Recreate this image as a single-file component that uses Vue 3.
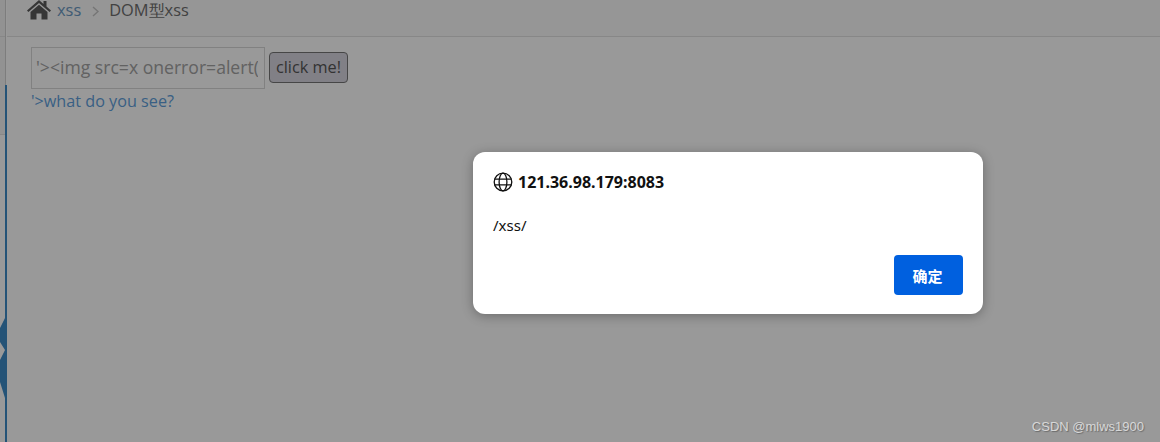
<template>
  <div class="page">
    <aside class="side">
      <div class="side-top">
        <div class="side-head"></div>
      </div>
      <div class="side-rest">
        <div class="side-item"></div>
        <svg class="side-arrows" width="5" height="80" viewBox="0 0 5 80">
          <path d="M5 0 L0 10 V24 L5 32 L0 42 V64 L5 80 Z" fill="#3d8ac7" />
        </svg>
      </div>
    </aside>
    <main class="main">
      <div class="crumbs">
        <svg class="home" width="24" height="20" viewBox="0 0 24 20">
          <path d="M12 0 L0 10.5 L1.4 12 L12 3 L22.6 12 L24 10.5 L19.5 6.5 V1 H16.5 V4 Z" fill="#5a5a5a" />
          <path d="M3.5 12 L12 4.8 L20.5 12 V19.5 H14.5 V13.5 H9.5 V19.5 H3.5 Z" fill="#5a5a5a" />
        </svg>
        <a class="crumb-link">xss</a>
        <svg class="sep" width="7" height="11" viewBox="0 0 7 11">
          <path d="M1 1 L6 5.5 L1 10" fill="none" stroke="#c4c4c4" stroke-width="1.4" />
        </svg>
        <span class="crumb-current">DOM型xss</span>
      </div>
      <div class="content">
        <div class="form-row">
          <input class="xss-input" type="text" value="'><img src=x onerror=alert(/xss/)>" readonly />
          <button class="click-btn">click me!</button>
        </div>
        <a class="see-link">'&gt;what do you see?</a>
      </div>
    </main>

    <div class="overlay">
      <div class="dialog">
        <div class="dialog-title">
          <svg width="20" height="20" viewBox="0 0 20 20" fill="none" stroke="#111" stroke-width="1.3">
            <circle cx="10" cy="10" r="8.8" />
            <ellipse cx="10" cy="10" rx="3.9" ry="8.8" />
            <path d="M1.4 7.2 H18.6 M1.4 12.8 H18.6" />
          </svg>
          <span>121.36.98.179:8083</span>
        </div>
        <div class="dialog-msg">/xss/</div>
        <div class="dialog-actions">
          <button class="ok-btn">确定</button>
        </div>
      </div>
    </div>

    <div class="watermark">CSDN @mlws1900</div>
  </div>
</template>

<script setup>
</script>

<style scoped>
.page {
  position: relative;
  display: flex;
  width: 1160px;
  height: 442px;
  overflow: hidden;
  background: #fff;
  font-family: "Open Sans", sans-serif;
}
.side {
  width: 7px;
  flex: none;
  display: flex;
  flex-direction: column;
}
.side-top {
  width: 5px;
  height: 85px;
  border-right: 1px solid #d0d0d0;
  background: #f4f4f4;
}
.side-head {
  height: 36px;
  border-bottom: 1px solid #e2e2e2;
}
.side-rest {
  flex: 1;
  border-right: 2px solid #3d8ac7;
}
.side-item {
  height: 50px;
  box-sizing: border-box;
  border-bottom: 1px solid #e2e2e2;
  background: #f4f4f4;
}
.side-arrows {
  display: block;
  margin-top: 183px;
}
.main {
  flex: 1;
}
.crumbs {
  display: flex;
  align-items: center;
  height: 37px;
  padding: 0 0 16px 20px;
  box-sizing: border-box;
  border-bottom: 1px solid #e2e2e2;
  background: #fafafa;
  font-size: 16.4px;
  line-height: 20px;
}
.home {
  margin-right: 6px;
}
.crumb-link {
  color: #6a98c2;
}
.sep {
  margin: 3px 10px 0 11px;
}
.crumb-current {
  color: #6e6e6e;
}
.content {
  padding: 10px 0 0 24px;
}
.form-row {
  display: flex;
  align-items: center;
  gap: 4px;
}
.xss-input {
  width: 234px;
  height: 42px;
  box-sizing: border-box;
  padding: 0 6px 2px 4px;
  border: 1px solid #d8d8d8;
  background: #fff;
  color: #a3a3a3;
  font-family: inherit;
  font-size: 17.6px;
  outline: none;
}
.click-btn {
  height: 31px;
  width: 79px;
  margin-bottom: 2px;
  padding: 0;
  border: 1px solid #767676;
  border-radius: 4px;
  background: #d8d5e0;
  color: #555;
  font-family: inherit;
  font-size: 16.3px;
}
.see-link {
  display: block;
  margin-top: 1px;
  color: #5f9fdc;
  font-size: 16.2px;
  line-height: 22px;
}
.overlay {
  position: absolute;
  inset: 0;
  background: rgba(0, 0, 0, 0.4);
}
.dialog {
  position: absolute;
  left: 473px;
  top: 152px;
  width: 510px;
  height: 162px;
  box-sizing: border-box;
  padding: 20px;
  border-radius: 12px;
  background: #fff;
  box-shadow: 0 2px 12px rgba(0, 0, 0, 0.3);
  font-family: "Noto Sans", "Noto Sans CJK SC", sans-serif;
}
.dialog-title {
  display: flex;
  align-items: center;
  gap: 5px;
  height: 20px;
  color: #111;
  font-size: 16px;
  font-weight: 700;
  line-height: 20px;
}
.dialog-msg {
  margin-top: 23px;
  height: 20px;
  color: #111;
  font-size: 15px;
  line-height: 20px;
}
.dialog-actions {
  display: flex;
  justify-content: flex-end;
  margin-top: 20px;
}
.ok-btn {
  width: 69px;
  height: 40px;
  padding: 0 2px 0 0;
  border: 0;
  border-radius: 4px;
  background: #0060df;
  color: #fff;
  font-family: "Noto Sans CJK SC", sans-serif;
  font-size: 15px;
  font-weight: 700;
}
.watermark {
  position: absolute;
  right: 16px;
  bottom: 8px;
  color: #d8d8d8;
  font-family: "Liberation Sans", sans-serif;
  font-size: 13px;
  text-shadow: 1px 1px 1px #6a6a6a;
}
</style>
